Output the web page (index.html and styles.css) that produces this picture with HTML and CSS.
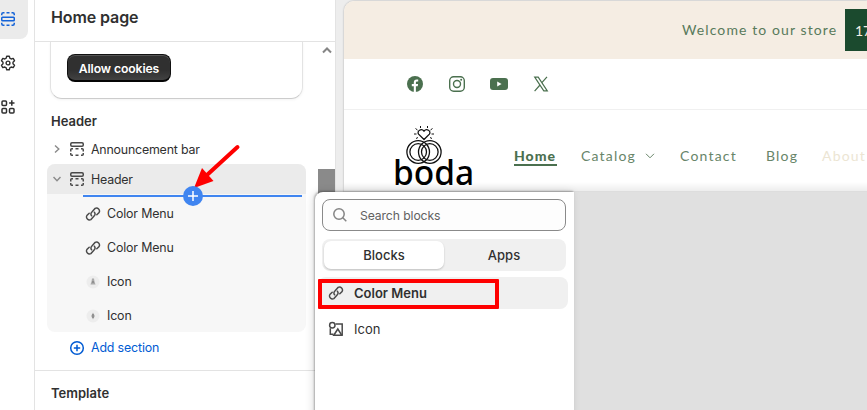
FILE: index.html
```html
<!DOCTYPE html>
<html lang="en">
<head>
<meta charset="utf-8">
<title>Home page</title>
<link rel="stylesheet" href="styles.css">
</head>
<body>
<svg class="defs" aria-hidden="true">
  <symbol id="link" viewBox="0 0 16 16"><g fill="none" stroke="currentColor" stroke-width="1.45" stroke-linecap="round"><path d="M6.6 9.8A3 3 0 0 1 6.9 5.9L10.1 2.4A3 3 0 0 1 14.1 6.5L11.8 8.8"/><path d="M9.4 6.2A3 3 0 0 1 9.1 10.1L5.9 13.6A3 3 0 0 1 1.9 9.5L4.2 7.2"/></g></symbol>
  <symbol id="section" viewBox="0 0 16 16"><g fill="none" stroke="currentColor" stroke-width="1.5"><rect x="1.75" y="1.75" width="12.5" height="3.5" rx="1.2"/><path d="M1.75 10.5V8.8Q1.75 7.75 2.8 7.75H4M6.5 7.75h3M12 7.75h1.2q1.05 0 1.05 1.05v1.7M1.75 12v1.2q0 1.05 1.05 1.05H4M6.5 14.25h3M12 14.25h1.2q1.05 0 1.05-1.05V12"/></g></symbol>
</svg>
<div class="app">
  <nav class="rail">
    <div class="rail-item active"><svg width="16" height="16" viewBox="0 0 16 16"><g fill="none" stroke="currentColor" stroke-width="1.5"><rect x="1.75" y="6.25" width="12.5" height="3.5" rx=".8"/><path d="M1.75 4.2V3.2Q1.75 1.75 3.2 1.75H4.5M6.5 1.75h3M11.5 1.75h1.3q1.45 0 1.45 1.45v1M1.75 11.8v1q0 1.45 1.45 1.45H4.5M6.5 14.25h3M11.5 14.25h1.3q1.45 0 1.45-1.45v-1"/></g></svg></div>
    <div class="rail-item"><svg width="16" height="16" viewBox="0 0 16 16"><g fill="none" stroke="currentColor" stroke-width="1.4" stroke-linejoin="round"><path d="M6.7 1.2h2.6l.5 2 1.4.8 2-.6 1.3 2.3L13 7.2v1.6l1.5 1.5-1.3 2.3-2-.6-1.4.8-.5 2H6.7l-.5-2-1.4-.8-2 .6-1.3-2.3L3 8.8V7.2L1.500 5.700 2.800 3.400l2 .6 1.400-.8z"/><circle cx="8" cy="8" r="1.900"/></g></svg></div>
    <div class="rail-item"><svg width="16" height="16" viewBox="0 0 16 16"><g fill="none" stroke="currentColor" stroke-width="1.5"><rect x="2" y="2" width="4.500" height="4.500" rx="1"/><rect x="2" y="9.500" width="4.500" height="4.500" rx="1"/><rect x="9.500" y="9.500" width="4.500" height="4.500" rx="1"/><path d="M11.800 1.300v5.400M9.100 4h5.400"/></g></svg></div>
  </nav>
  <aside class="panel">
    <header class="panel-head">Home page</header>
    <div class="panel-body">
      <div class="card"><button class="cookies">Allow cookies</button></div>
      <h2 class="group-title">Header</h2>
      <div class="row"><svg class="chev" viewBox="0 0 8 8"><path d="M2 .5 5.800 4 2 7.500"/></svg><svg class="ic"><use href="#section"/></svg><span>Announcement bar</span></div>
      <div class="tree">
        <div class="row selected"><svg class="chev" viewBox="0 0 8 8"><path d="M.5 2 4 5.800 7.500 2"/></svg><svg class="ic"><use href="#section"/></svg><span>Header</span>
          <div class="insert"><svg width="20" height="20"><circle cx="10" cy="10" r="10" fill="#4085f0"/><path d="M10 5v10M5 10h10" stroke="#fff" stroke-width="1.500"/></svg></div>
        </div>
        <div class="block first"><svg class="ic"><use href="#link"/></svg>Color Menu</div>
        <div class="block"><svg class="ic"><use href="#link"/></svg>Color Menu</div>
        <div class="block"><svg class="ic" viewBox="0 0 16 16"><circle cx="8" cy="8" r="6.500" fill="#ededed"/><path d="M7 4.500h2l.5 3 1 3h-5l1-3z" fill="#aaa"/><path d="M7 8h2" stroke="#777"/></svg>Icon</div>
        <div class="block"><svg class="ic" viewBox="0 0 16 16"><circle cx="8" cy="8" r="6.500" fill="#ededed"/><path d="M8 4.500 9.800 8 8 11.500 6.200 8z" fill="#aaa"/><path d="M8 6v4" stroke="#777"/></svg>Icon</div>
      </div>
      <div class="add"><svg width="16" height="16" viewBox="0 0 16 16" fill="none" stroke="currentColor" stroke-width="1.500"><circle cx="8" cy="8" r="6.300"/><path d="M8 4.800v6.400M4.800 8h6.400"/></svg>Add section</div>
      <h2 class="template">Template</h2>
      <div class="scroll"><svg width="10" height="8" viewBox="0 0 10 8"><path d="M1 6.500 5 2.500 9 6.500" fill="none" stroke="#858585" stroke-width="2"/></svg><div class="thumb"></div></div>
    </div>
  </aside>
  <main class="stage">
    <div class="store">
      <div class="announce"><span>Welcome to our store</span><b>17</b></div>
      <div class="social">
        <svg viewBox="0 0 16 16"><circle cx="8" cy="8" r="8" fill="#4b704f"/><path d="M6.800 16V10.200H4.800V8h2V6.400q0-2.900 2.900-2.900h1.500v2H10q-1.100 0-1.100 1.100V8h2.200l-.4 2.200H8.900V16z" fill="#fff"/></svg>
        <svg viewBox="0 0 16 16"><g fill="none" stroke="#4b704f" stroke-width="1.400"><rect x=".7" y=".7" width="14.600" height="14.600" rx="4"/><circle cx="8" cy="8" r="3.500"/></g><circle cx="12.200" cy="3.800" r="1" fill="#4b704f"/></svg>
        <svg class="yt" viewBox="0 0 18 16"><rect y="2" width="18" height="12" rx="3" fill="#4b704f"/><path d="M7.200 5.500 11.600 8 7.200 10.500z" fill="#fff"/></svg>
        <svg viewBox="0 0 16 16"><g fill="none" stroke="#4b704f" stroke-width="1.200"><path d="M1.700 1.200h3.500l9.100 13.600h-3.500zM14 .8 8.900 6.700M7 9 1.600 15.200"/></g></svg>
      </div>
      <div class="navbar">
        <div class="logo">
          <svg width="40" height="39" viewBox="0 0 40 39"><g fill="none" stroke="#111"><g stroke-width="1.300"><circle cx="14.200" cy="26" r="11.300"/><circle cx="14.200" cy="26" r="8.300"/><circle cx="25.800" cy="26" r="11.300"/><circle cx="25.800" cy="26" r="8.300"/></g><path d="M20 13.500 14.600 8.200C12.400 5 17.500 1.700 20 5.200 22.500 1.700 27.600 5 25.400 8.200z" stroke-width="1.300"/><path d="M11.500 2.500l2 1.500M10 8h2.500M12 12.500l2-1M28.500 2.500l-2 1.500M30 8h-2.500M28 12.500l-2-1M16.500 0v2M23.500 0v2"/></g></svg>
          <span>boda</span>
        </div>
        <div class="menu"><span class="home">Home</span><span class="catalog">Catalog<svg width="10" height="6" viewBox="0 0 10 6"><path d="M1 .8 5 4.800 9 .8" fill="none" stroke="currentColor"/></svg></span><span class="contact">Contact</span><span class="blog">Blog</span><span class="about">About</span></div>
      </div>
      <div class="hero"></div>
    </div>
  </main>
</div>
<section class="popover">
  <div class="search"><svg width="16" height="16" viewBox="0 0 16 16" fill="none" stroke="#858585" stroke-width="1.500"><circle cx="7" cy="7" r="5.200"/><path d="M10.800 10.800 14.300 14.300"/></svg><span>Search blocks</span></div>
  <div class="tabs"><span class="on">Blocks</span><span>Apps</span></div>
  <div class="option hot"><svg class="ic"><use href="#link"/></svg>Color Menu</div>
  <div class="option"><svg class="ic" viewBox="0 0 16 16" fill="none" stroke="currentColor" stroke-width="1.500"><path d="M7.500 3H14.200V14.200M2.300 7.200V13.200H5.500"/><circle cx="4.300" cy="4.300" r="2.700"/><path d="M5.800 14.250 9.800 8l4 6.250z"/></svg>Icon</div>
</section>
<div class="frame-mark"></div>
<svg class="arrow" width="50" height="48" viewBox="0 0 50 48"><path d="M44.500 4 14 32" stroke="#fe0000" stroke-width="4" stroke-linecap="round"/><path d="M1 45 9 25 20.500 38z" fill="#fe0000"/></svg>
</body>
</html>
```
FILE: styles.css
```css
* { box-sizing: border-box; }
body { margin: 0; width: 867px; height: 410px; overflow: hidden; font: 13px/20px Inter, sans-serif; color: #303030; background: #fff; }
.defs { position: absolute; width: 0; height: 0; }
svg { flex: none; display: block; }
.app { display: flex; height: 410px; }
.rail { width: 35px; flex: none; border-right: 1px solid #e3e3e3; display: flex; flex-direction: column; gap: 5px; }
.rail-item { width: 28px; height: 39px; display: flex; align-items: center; color: #303030; padding-bottom: 2px; }
.rail-item.active { background: #ebebeb; border-radius: 0 0 8px 0; color: #1463d8; }
.panel { width: 300px; flex: none; display: flex; flex-direction: column; }
.panel-head { height: 42px; flex: none; padding: 7px 16px; border-bottom: 1px solid #e3e3e3; font-size: 16px; font-weight: 600; letter-spacing: -.1px; }
.panel-body { position: relative; flex: 1; }
.card { margin-left: 15px; width: 253px; height: 57px; padding: 12px 16px; border: 1px solid #e3e3e3; border-top: 0; border-bottom-color: #ccc; border-radius: 0 0 12px 12px; box-shadow: 0 1px 3px #0000000d; }
.cookies { display: block; width: 104px; height: 28px; padding: 2px 0 0; border: 1px solid #111; border-bottom: 2px solid #050505; border-radius: 8px; background: linear-gradient(#303030 60%, #424242); box-shadow: inset 0 1px #555; color: #fff; font: 600 12.2px Inter, sans-serif; letter-spacing: -.1px; }
h2 { margin: 0; font-size: 13px; line-height: 20px; font-weight: 600; }
.group-title { padding: 12px 16px 3px; }
.row { height: 30px; display: flex; align-items: center; padding-left: 18px; }
.chev { width: 8px; height: 8px; margin-right: 8px; fill: none; stroke: #8a8a8a; stroke-width: 1.4; }
.ic { width: 16px; height: 16px; color: #4a4a4a; }
.row .ic { margin-right: 6px; }
.row span { font-size: 12.4px; letter-spacing: -.2px; padding-top: 2px; }
.tree { margin-left: 12px; width: 259px; height: 168px; background: #f7f7f7; border-radius: 8px; }
.row.selected { position: relative; background: #ebebeb; border-radius: 8px 8px 0 0; padding-left: 6px; }
.insert { position: absolute; left: 36px; right: 4px; top: 31px; height: 2px; background: #4085f0; display: flex; align-items: center; justify-content: center; z-index: 2; }
.block { height: 34px; padding-left: 38px; display: flex; align-items: center; gap: 6px; font-size: 12.4px; letter-spacing: -.15px; }
.block.first { margin-top: 3px; }
.add { height: 39px; padding: 0 0 7px 34px; display: flex; align-items: center; gap: 6px; color: #005bd3; font-size: 12.4px; letter-spacing: -.15px; border-bottom: 1px solid #e3e3e3; }
.template { padding: 12px 16px; }
.scroll { position: absolute; top: 0; right: 0; width: 17px; height: 100%; display: flex; flex-direction: column; align-items: center; padding-top: 4px; }
.thumb { width: 17px; height: 180px; margin-top: 115px; background: #8a8a8a; }
.stage { flex: 1; min-width: 0; background: #ededed; padding: 1px 0 0 8px; border-left: 1px solid #e3e3e3; }
.store { height: 409px; background: #fff; border-radius: 10px 0 0 0; overflow: hidden; display: flex; flex-direction: column; box-shadow: 0 0 2px #0005; color: #587a5b; font-family: Lato, sans-serif; }
.announce { height: 58px; background: #f5ede3; display: flex; justify-content: flex-end; align-items: center; font-size: 14px; letter-spacing: 1.1px; }
.announce span { width: 163px; white-space: nowrap; }
.announce b { width: 22px; height: 42px; background: #1b4a2e; color: #f5ede3; font-weight: 400; font-size: 14px; line-height: 44px; padding-left: 10px; letter-spacing: 0; overflow: hidden; }
.social { height: 51px; border-bottom: 1px solid #f0f0f0; display: flex; align-items: center; padding-left: 63px; gap: 26px; }
.social svg { width: 16px; height: 16px; }
.social .yt { width: 18px; margin: 0 -1px; }
.navbar { height: 82px; display: flex; background: linear-gradient(#fff 72px, #ededed); border-bottom: 1px solid #ddd; }
.logo { width: 81px; margin-left: 49px; padding-top: 16px; display: flex; flex-direction: column; color: #000; }
.logo svg { margin-left: 11px; }
.logo span { font: 500 33.500px/34px "Noto Sans", sans-serif; margin-top: -10px; height: 34px; }
.menu { display: flex; align-items: flex-start; padding: 37px 0 0 40px; font-size: 14px; line-height: 18px; letter-spacing: 1.2px; white-space: nowrap; color: #688569; }
.menu span { flex: none; }
.home { width: 43px; height: 19px; line-height: 17px; margin-right: 24px; font-weight: 900; letter-spacing: 1px; color: #4b704f; border-bottom: 2px solid #4b704f; }
.catalog { width: 99px; display: flex; align-items: center; gap: 9px; }
.contact { width: 86px; }
.blog { width: 56px; }
.about { color: #ece5d3; }
.hero { flex: 1; background: #e0e0e0; }
.popover { position: absolute; left: 315px; top: 192px; width: 259px; height: 230px; background: #fff; border-radius: 8px 0 0 0; box-shadow: -1px -1px 2px #0004, -2px 0 8px #0002; padding: 7px 7px 0; }
.search { width: 244px; height: 32px; border: 1px solid #8a8a8a; border-radius: 8px; background: #fdfdfd; display: flex; align-items: center; gap: 12px; padding-left: 9px; font-size: 12.2px; letter-spacing: -.1px; color: #616161; }
.search span { padding-top: 2px; }
.tabs { width: 244px; height: 32px; margin-top: 8px; padding: 2px; background: #f0f0f0; border-radius: 8px; display: flex; font-weight: 500; }
.tabs span { flex: 1; display: flex; align-items: center; justify-content: center; }
.tabs .on { background: #fff; border-radius: 7px; box-shadow: 0 1px 2px #0003; }
.option { width: 250px; margin-left: -4px; height: 32px; padding-left: 10px; display: flex; align-items: center; gap: 10px; margin-top: 4px; }
.option.hot { margin-top: 6px; background: #f0f0f0; border-radius: 8px; font-weight: 600; }
.frame-mark { position: absolute; left: 318px; top: 279px; width: 181px; height: 30px; border: 4px solid #fe0000; border-radius: 1px; }
.arrow { position: absolute; left: 193px; top: 143px; }
```
